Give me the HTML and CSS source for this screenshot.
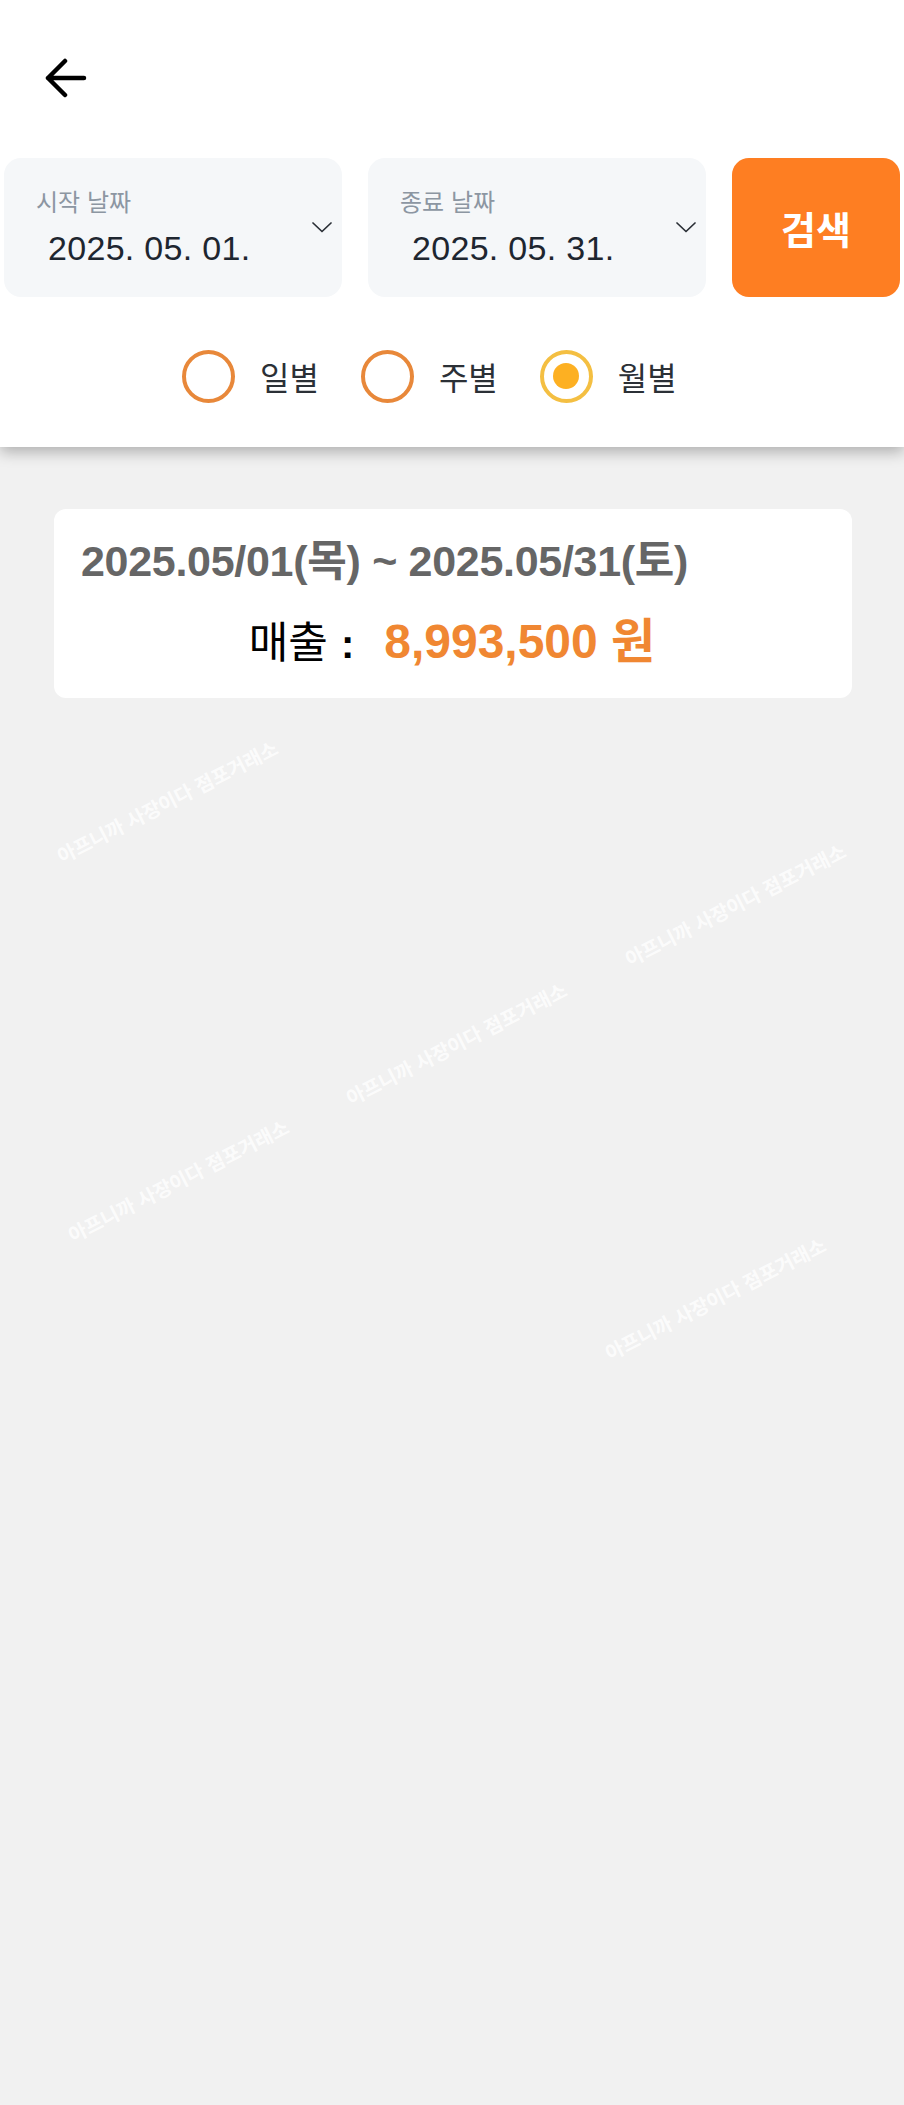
FILE: index.html
```html
<!DOCTYPE html>
<html lang="ko">
<head>
<meta charset="utf-8">
<title>매출 조회</title>
<link rel="stylesheet" href="styles.css">
</head>
<body>
<header class="header">
  <div class="topbar">
    <button class="back" aria-label="뒤로">
      <svg width="42" height="40" viewBox="0 0 42 40" fill="none" stroke="#000" stroke-width="4.5" stroke-linecap="round" stroke-linejoin="round"><path d="M39 20H3M20 3L3 20L20 37"/></svg>
    </button>
  </div>
  <div class="date-row">
    <div class="date-box">
      <div class="date-text">
        <div class="date-label">시작 날짜</div>
        <div class="date-value">2025. 05. 01.</div>
      </div>
      <svg class="chev" width="22" height="12" viewBox="0 0 22 12" fill="none" stroke="#2a2f36" stroke-width="1.7" stroke-linecap="round" stroke-linejoin="round"><path d="M2 2L11 10.5L20 2"/></svg>
    </div>
    <div class="date-box">
      <div class="date-text">
        <div class="date-label">종료 날짜</div>
        <div class="date-value">2025. 05. 31.</div>
      </div>
      <svg class="chev" width="22" height="12" viewBox="0 0 22 12" fill="none" stroke="#2a2f36" stroke-width="1.7" stroke-linecap="round" stroke-linejoin="round"><path d="M2 2L11 10.5L20 2"/></svg>
    </div>
    <button class="search">검색</button>
  </div>
  <div class="radio-row">
    <div class="radio-item"><span class="radio"></span><span class="radio-text">일별</span></div>
    <div class="radio-item"><span class="radio"></span><span class="radio-text">주별</span></div>
    <div class="radio-item"><span class="radio selected"><span class="dot"></span></span><span class="radio-text">월별</span></div>
  </div>
</header>
<main class="main">
  <section class="card">
    <div class="card-title">2025.05/01(목) ~ 2025.05/31(토)</div>
    <div class="card-amount"><span class="amount-label">매출</span><span class="amount-colon">:</span><span class="amount-value">8,993,500 원</span></div>
  </section>
</main>
<div class="watermarks" aria-hidden="true">
  <span class="wm wm1">아프니까 사장이다 점포거래소</span>
  <span class="wm wm2">아프니까 사장이다 점포거래소</span>
  <span class="wm wm3">아프니까 사장이다 점포거래소</span>
  <span class="wm wm4">아프니까 사장이다 점포거래소</span>
  <span class="wm wm5">아프니까 사장이다 점포거래소</span>
</div>
</body>
</html>
```
FILE: styles.css
```css
* { box-sizing: border-box; }
html, body { margin: 0; padding: 0; }
body {
  background: #f1f1f1;
  min-height: 2105px;
  font-family: "Liberation Sans", "Noto Sans CJK KR", sans-serif;
  position: relative;
  overflow: hidden;
}
.header {
  background: #fff;
  box-shadow: 0 5px 14px rgba(0,0,0,0.28);
  position: relative;
  z-index: 1;
  padding-bottom: 44px;
}
.topbar {
  height: 158px;
  padding: 58px 0 0 45px;
}
.back {
  border: 0;
  background: none;
  padding: 0;
  display: block;
  width: 42px;
  height: 40px;
}
.date-row {
  display: flex;
  gap: 26px;
  padding: 0 4px;
  height: 139px;
}
.date-box {
  flex: 1;
  background: #f5f7f9;
  border-radius: 17px;
  display: flex;
  align-items: center;
  padding: 0 9px 0 32px;
}
.date-text {
  flex: 1;
  align-self: flex-start;
  padding-top: 27px;
}
.date-label {
  font-family: "Noto Sans CJK KR", sans-serif;
  font-size: 24px;
  line-height: 32px;
  color: #8c96a2;
}
.date-value {
  margin-top: 11px;
  padding-left: 12px;
  font-size: 34px;
  line-height: 40px;
  color: #1e2630;
  letter-spacing: 0.3px;
}
.chev { display: block; margin-bottom: 2px; }
.search {
  width: 168px;
  border: 0;
  border-radius: 17px;
  background: #fe7e22;
  color: #fff;
  font-family: "Noto Sans CJK KR", sans-serif;
  font-weight: 700;
  font-size: 38px;
  padding: 0;
}
.radio-row {
  display: flex;
  align-items: center;
  gap: 42px;
  padding-left: 182px;
  margin-top: 52px;
  height: 54px;
}
.radio-item {
  display: flex;
  align-items: center;
  gap: 25px;
}
.radio {
  width: 53px;
  height: 53px;
  border-radius: 50%;
  border: 4px solid #e8883a;
  display: flex;
  align-items: center;
  justify-content: center;
}
.radio.selected { border-color: #f4bf42; }
.dot {
  width: 26px;
  height: 26px;
  border-radius: 50%;
  background: #fdb022;
}
.radio-text {
  font-family: "Noto Sans CJK KR", sans-serif;
  font-size: 32px;
  color: #2b3036;
}
.main {
  padding: 62px 52px 0 54px;
}
.card {
  background: #fff;
  border-radius: 12px;
  padding: 27px 27px 26px 27px;
}
.card-title {
  font-weight: 700;
  font-size: 43px;
  line-height: 50px;
  color: #666;
  white-space: nowrap;
  letter-spacing: -0.3px;
}
.card-amount {
  margin-top: 25px;
  display: flex;
  justify-content: center;
  align-items: baseline;
  line-height: 56px;
  padding-right: 2px;
}
.amount-label {
  font-family: "Noto Sans CJK KR", sans-serif;
  font-size: 43px;
  color: #000;
}
.amount-colon {
  font-weight: 700;
  font-size: 40px;
  color: #000;
  margin: 0 30px 0 13px;
}
.amount-value {
  font-weight: 700;
  font-size: 48px;
  color: #f08732;
}
.watermarks {
  position: absolute;
  inset: 0;
  pointer-events: none;
}
.wm {
  position: absolute;
  font-family: "Noto Sans CJK KR", sans-serif;
  font-size: 19.5px;
  font-weight: 700;
  color: rgba(255,255,255,0.8);
  white-space: nowrap;
  transform: translate(-50%, -50%) rotate(-27deg);
}
.wm1 { left: 167px; top: 801px; }
.wm2 { left: 735px; top: 904px; }
.wm3 { left: 456px; top: 1043px; }
.wm4 { left: 178px; top: 1180px; }
.wm5 { left: 715px; top: 1298px; }
```
